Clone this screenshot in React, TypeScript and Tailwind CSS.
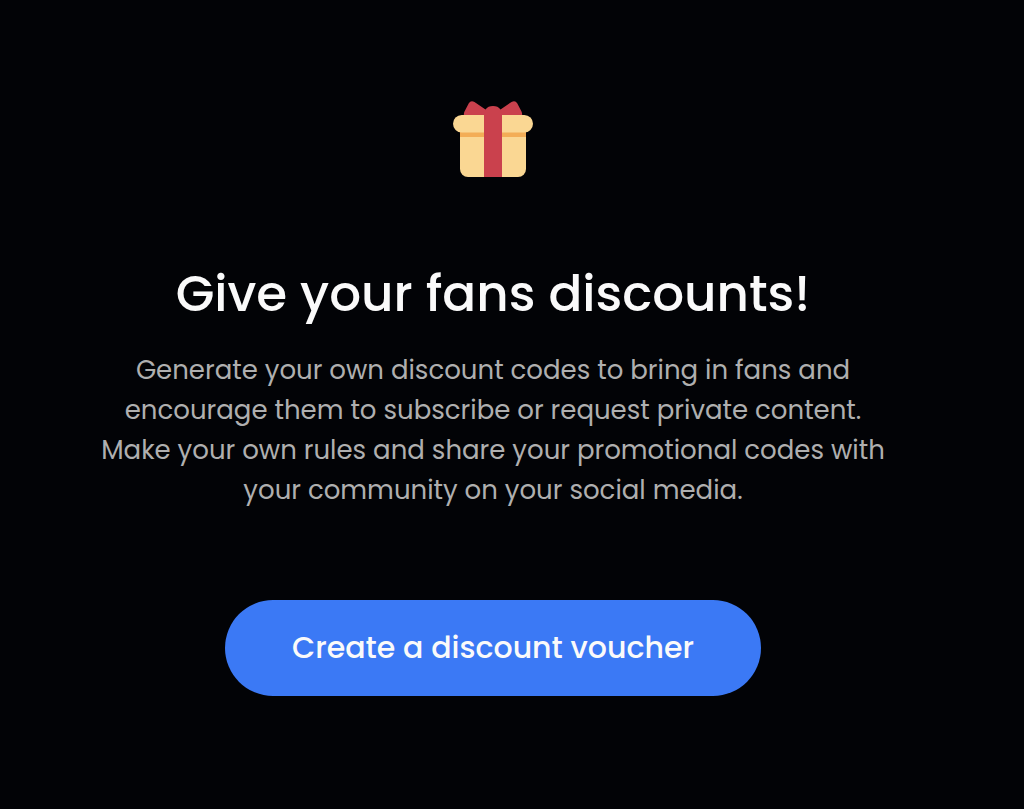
function GiftIcon() {
  return (
    <svg className="w-20 h-20" viewBox="0 0 80 80" aria-hidden="true">
      {/* Box */}
      <path d="M7 28h66v41a8 8 0 0 1-8 8H15a8 8 0 0 1-8-8z" fill="#fad793" />
      <path d="M7 32h66v5H7z" fill="#f3ad56" />
      {/* Bow */}
      <path
        d="M11 16Q10.500 13.500 11.500 11.500L15.800 3.300Q17.800 0 21.500 2L32.500 9.400Q35 6 40 6T47.500 9.400L58.500 2Q62.200 0 64.200 3.300L68.500 11.500Q69.500 13.500 69 16z"
        fill="#ca414d"
      />
      {/* Lid */}
      <rect x="0" y="15" width="80" height="17.500" rx="8.700" fill="#fad793" />
      {/* Ribbon */}
      <path d="M31 12h18v65H31z" fill="#ca414d" />
    </svg>
  );
}

export default function App() {
  return (
    <main className="min-h-screen bg-[#020306] pt-[100px] pb-28 pl-4 pr-[54px] flex flex-col items-center text-center font-['Poppins','Inter',sans-serif]">
      <GiftIcon />

      {/* Title */}
      <h1 className="mt-20 text-[50px] leading-[68px] font-medium text-[#fafafa]">
        Give your fans discounts!
      </h1>

      {/* Message */}
      <p className="mt-[22px] w-full max-w-[800px] text-[26px] leading-10 text-[#afafaf]">
        Generate your own discount codes to bring in fans and
        <br />
        encourage them to subscribe or request private content.
        <br />
        Make your own rules and share your promotional codes with
        <br />
        your community on your social media.
      </p>

      {/* Action */}
      <button
        type="button"
        className="mt-[90px] w-full max-w-[536px] h-24 rounded-full bg-[#3b79f5] text-[30px] leading-10 font-medium text-[#fafafa] cursor-pointer hover:bg-blue-600 transition-colors"
      >
        Create a discount voucher
      </button>
    </main>
  );
}
